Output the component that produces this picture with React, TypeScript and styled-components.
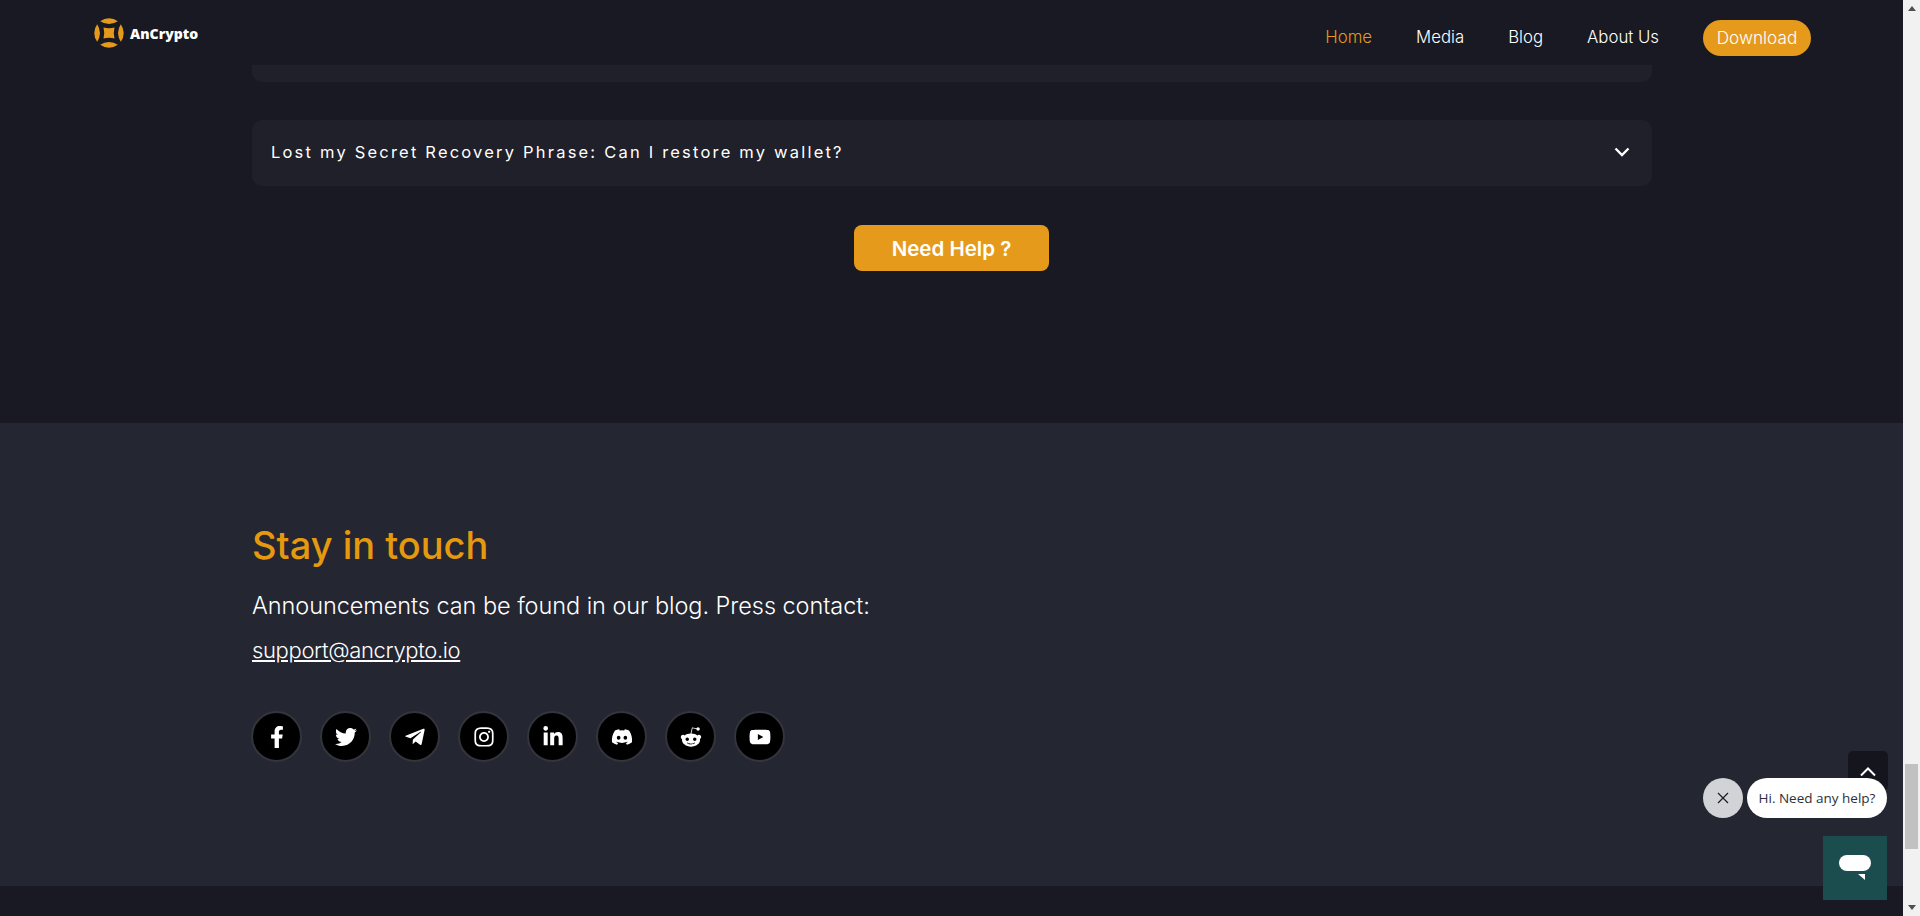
import React from "react";
import styled, { createGlobalStyle } from "styled-components";
import {
  FaDiscord,
  FaFacebookF,
  FaInstagram,
  FaLinkedinIn,
  FaRedditAlien,
  FaTelegramPlane,
  FaTwitter,
  FaYoutube,
} from "react-icons/fa";

const GlobalStyle = createGlobalStyle`
  html, body {
    margin: 0;
    height: 100%;
    overflow: hidden;
    background: #181922;
    font-family: Inter, "Open Sans", "Liberation Sans", sans-serif;
  }
  * {
    box-sizing: border-box;
  }
`;

const Shell = styled.div`
  display: flex;
  height: 916px;
  overflow: hidden;
`;

const Page = styled.div`
  flex: 1;
  min-width: 0;
  display: flex;
  flex-direction: column;
`;

const Header = styled.header`
  height: 65px;
  padding: 18px 92px 0 94px;
  display: flex;
  align-items: flex-start;
  justify-content: space-between;
  background: #181922;
`;

const Brand = styled.div`
  height: 30px;
  display: flex;
  align-items: center;
  gap: 6px;
  font-family: "Open Sans", sans-serif;
  font-weight: 800;
  font-size: 14px;
  color: #fff;
`;

const Nav = styled.nav`
  height: 36px;
  margin-top: 2px;
  display: flex;
  align-items: center;
  gap: 44px;
`;

const NavLink = styled.a<{ $active?: boolean }>`
  padding-bottom: 2px;
  font-size: 16.8px;
  font-weight: 300;
  color: ${(p) => (p.$active ? "#e59a1c" : "#fff")};
`;

const DownloadButton = styled.a`
  width: 108px;
  height: 36px;
  padding-bottom: 1px;
  border-radius: 18px;
  background: #e59a1c;
  color: #fff;
  font-size: 17.2px;
  font-weight: 300;
  display: flex;
  align-items: center;
  justify-content: center;
`;

const Faq = styled.section`
  height: 358px;
  padding: 0 251px 0 252px;
  display: flex;
  flex-direction: column;
  align-items: center;
`;

const ClippedItem = styled.div`
  width: 100%;
  height: 17px;
  background: #1f2029;
  border-radius: 0 0 10px 10px;
`;

const Question = styled.div`
  width: 100%;
  height: 66px;
  margin-top: 38px;
  padding: 0 22px 2px 19px;
  background: #1f2029;
  border-radius: 10px;
  display: flex;
  align-items: center;
  justify-content: space-between;
  color: #fff;
  font-size: 16.5px;
  font-weight: 400;
  letter-spacing: 2.2px;
`;

const HelpButton = styled.a`
  width: 195px;
  height: 46px;
  margin: 39px 1px 0 0;
  border-radius: 8px;
  background: #e59a1c;
  color: #fff;
  font-size: 20.5px;
  font-weight: 600;
  display: flex;
  align-items: center;
  justify-content: center;
`;

const Footer = styled.footer`
  height: 463px;
  padding: 98px 252px 0;
  background: #242632;
`;

const Title = styled.h2`
  margin: 0;
  font-size: 38px;
  line-height: 48px;
  font-weight: 500;
  color: #e5990f;
`;

const Lead = styled.p`
  margin: 19px 0 0;
  font-size: 23.5px;
  line-height: 36px;
  font-weight: 300;
  letter-spacing: -0.06px;
  color: #fff;
`;

const Mail = styled.a`
  display: inline-block;
  margin-top: 8px;
  font-size: 22px;
  line-height: 36px;
  font-weight: 300;
  letter-spacing: -0.35px;
  color: #fff;
  text-decoration: underline;
`;

const Socials = styled.div`
  margin: 43px 0 0 -1px;
  display: flex;
  gap: 18px;
`;

const SocialLink = styled.a`
  width: 51px;
  height: 51px;
  border-radius: 50%;
  background: #000;
  border: 2px solid #33343c;
  color: #fff;
  font-size: 22px;
  display: flex;
  align-items: center;
  justify-content: center;
`;

const BottomStrip = styled.div`
  flex: 1;
  background: #181922;
`;

const ScrollBar = styled.div`
  width: 17px;
  background: #f1f1f1;
  display: flex;
  flex-direction: column;
  align-items: center;
  justify-content: space-between;
  padding: 6px 0;
  position: relative;
`;

const ScrollArrow = styled.span<{ $down?: boolean }>`
  width: 0;
  height: 0;
  border-left: 4.5px solid transparent;
  border-right: 4.5px solid transparent;
  ${(p) =>
    p.$down
      ? "border-top: 5px solid #505050;"
      : "border-bottom: 5px solid #505050;"}
`;

const ScrollThumb = styled.span`
  position: absolute;
  left: 2px;
  top: 764px;
  width: 13px;
  height: 85px;
  background: #c1c1c1;
`;

const ToTop = styled.a`
  position: fixed;
  left: 1848px;
  top: 751px;
  width: 40px;
  height: 40px;
  padding-top: 16px;
  border-radius: 5px;
  background: #14151d;
  display: flex;
  justify-content: center;
`;

const DismissButton = styled.button`
  position: fixed;
  left: 1703px;
  top: 778px;
  width: 40px;
  height: 40px;
  padding: 0;
  border: 0;
  border-radius: 50%;
  background: #d2d3d6;
  display: flex;
  align-items: center;
  justify-content: center;
`;

const Bubble = styled.div`
  position: fixed;
  left: 1747px;
  top: 778px;
  width: 140px;
  height: 40px;
  border-radius: 20px;
  background: #fff;
  color: #2c2f36;
  font-family: "Open Sans", sans-serif;
  font-size: 13.5px;
  display: flex;
  align-items: center;
  justify-content: center;
`;

const ChatLauncher = styled.button`
  position: fixed;
  left: 1823px;
  top: 836px;
  width: 64px;
  height: 64px;
  padding: 0;
  border: 0;
  background: #1b4d4f;
  display: flex;
  align-items: center;
  justify-content: center;
`;

const socials = [
  { name: "facebook", Icon: FaFacebookF },
  { name: "twitter", Icon: FaTwitter },
  { name: "telegram", Icon: FaTelegramPlane },
  { name: "instagram", Icon: FaInstagram },
  { name: "linkedin", Icon: FaLinkedinIn },
  { name: "discord", Icon: FaDiscord },
  { name: "reddit", Icon: FaRedditAlien },
  { name: "youtube", Icon: FaYoutube },
];

const Logo = () => (
  <svg width="30" height="30" viewBox="0 0 30 30">
    <g fill="#e59a1c">
      <path d="M6.2 3.2A14.7 14.7 0 0 1 23.8 3.2 17 17 0 0 1 15 6 17 17 0 0 1 6.2 3.2Z" />
      <path d="M6.2 26.8A14.7 14.7 0 0 0 23.8 26.8 17 17 0 0 0 15 24 17 17 0 0 0 6.2 26.8Z" />
      <path d="M3.2 6.2A14.7 14.7 0 0 0 3.2 23.8 17 17 0 0 0 6 15 17 17 0 0 0 3.2 6.2Z" />
      <path d="M26.8 6.2A14.7 14.7 0 0 1 26.8 23.8 17 17 0 0 1 24 15 17 17 0 0 1 26.8 6.2Z" />
      <path d="M9.5 9.5Q15 11 20.5 9.5 19 15 20.5 20.5 15 19 9.5 20.5 11 15 9.5 9.5Z" />
    </g>
  </svg>
);

const App = () => {
  return (
    <Shell>
      <GlobalStyle />
      <Page>
        <Header>
          <Brand>
            <Logo />
            AnCrypto
          </Brand>
          <Nav>
            <NavLink $active>Home</NavLink>
            <NavLink>Media</NavLink>
            <NavLink>Blog</NavLink>
            <NavLink>About Us</NavLink>
            <DownloadButton>Download</DownloadButton>
          </Nav>
        </Header>
        <Faq>
          <ClippedItem />
          <Question>
            Lost my Secret Recovery Phrase: Can I restore my wallet?
            <svg width="16" height="10" viewBox="0 0 16 10" fill="none">
              <path d="M1.5 1.5 8 8l6.5-6.5" stroke="#fff" strokeWidth="2.4" />
            </svg>
          </Question>
          <HelpButton>Need Help ?</HelpButton>
        </Faq>
        <Footer>
          <Title>Stay in touch</Title>
          <Lead>Announcements can be found in our blog. Press contact:</Lead>
          <Mail>support@ancrypto.io</Mail>
          <Socials>
            {socials.map(({ name, Icon }) => (
              <SocialLink key={name} aria-label={name}>
                <Icon />
              </SocialLink>
            ))}
          </Socials>
        </Footer>
        <BottomStrip />
      </Page>
      <ScrollBar>
        <ScrollArrow />
        <ScrollThumb />
        <ScrollArrow $down />
      </ScrollBar>
      <ToTop>
        <svg width="16" height="10" viewBox="0 0 16 10" fill="none">
          <path d="M1 8.5 8 1.5l7 7" stroke="#fff" strokeWidth="2" />
        </svg>
      </ToTop>
      <DismissButton aria-label="close">
        <svg width="12" height="12" viewBox="0 0 12 12" fill="none">
          <path d="M1 1l10 10M11 1 1 11" stroke="#1c1c1c" strokeWidth="1.2" />
        </svg>
      </DismissButton>
      <Bubble>Hi. Need any help?</Bubble>
      <ChatLauncher aria-label="chat">
        <svg width="32" height="26" viewBox="0 0 32 26">
          <rect x="0" y="0" width="32" height="16" rx="8" fill="#fff" />
          <path d="M19 19h7v6Z" fill="#fff" />
        </svg>
      </ChatLauncher>
    </Shell>
  );
};

export default App;
